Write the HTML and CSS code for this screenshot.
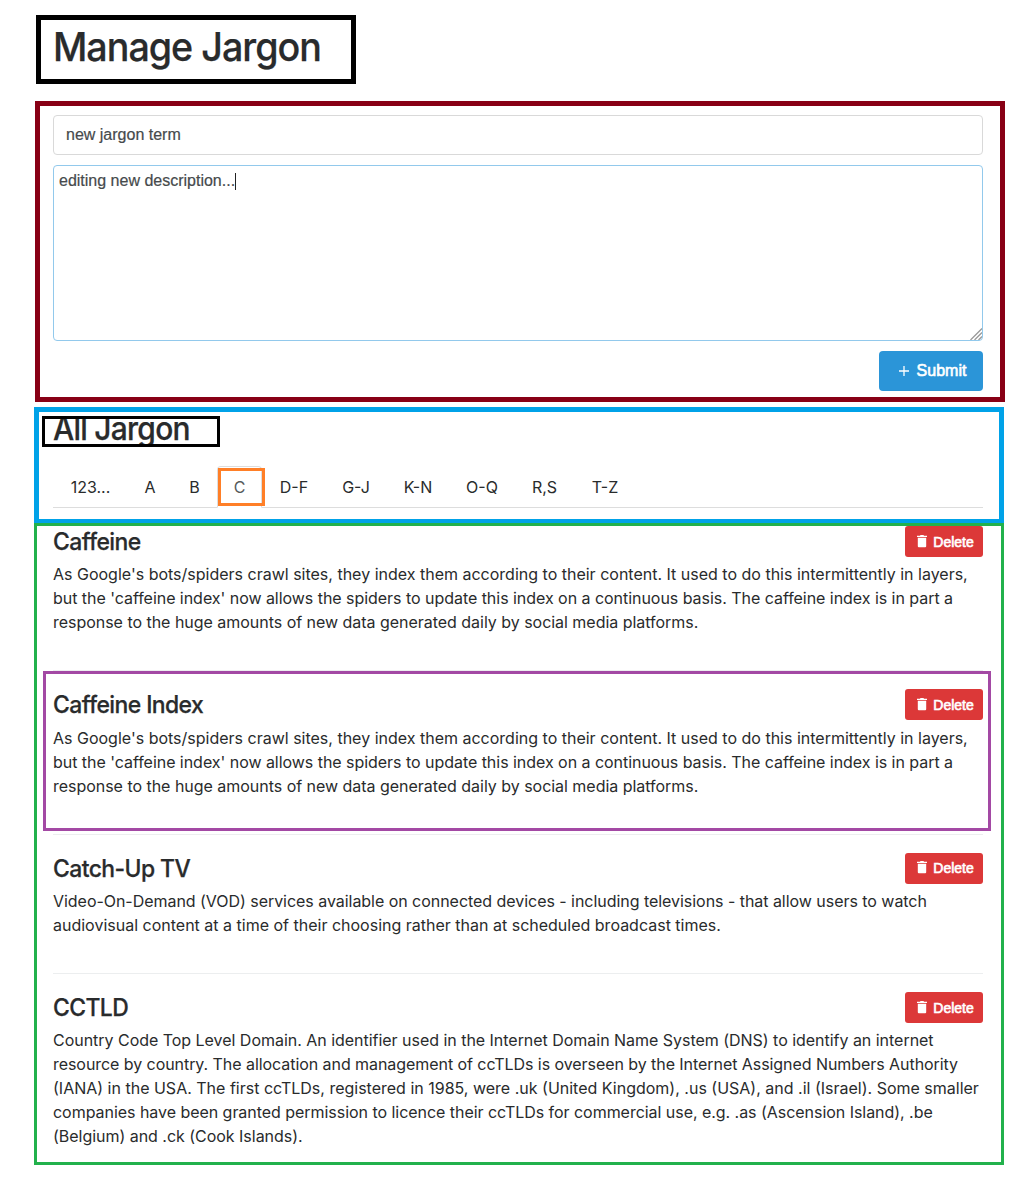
FILE: index.html
```html
<!DOCTYPE html>
<html lang="en">
<head>
<meta charset="utf-8">
<title>Manage Jargon</title>
<link rel="stylesheet" href="styles.css">
</head>
<body>
<svg width="0" height="0" class="defs">
  <symbol id="trash" viewBox="0 0 10 13"><path d="M0 .8h3L3.500 0h3L7 .8h3V2H0zM.8 2.8h8.4v8.4a1 1 0 0 1-1 1H1.8a1 1 0 0 1-1-1z" fill="#fff"/></symbol>
</svg>
<main class="page">
  <h1 class="page-title"><span>Manage Jargon</span></h1>

  <form class="editor">
    <input class="term" type="text" value="new jargon term" aria-label="Term">
    <div class="description" role="textbox" aria-multiline="true"><span class="typed">editing new description...</span><span class="caret"></span>
      <svg class="grip" width="12" height="12" viewBox="0 0 12 12"><path d="M.5 12l11.500-11.500M4.500 12l7.500-7.500M8.500 12l3.500-3.500" stroke="#999" stroke-width="1.3" fill="none"/></svg>
    </div>
    <button class="submit" type="button"><svg width="10" height="10" viewBox="0 0 10 10"><path d="M5 0v10M0 5h10" stroke="#fff" stroke-width="1.3"/></svg><span>Submit</span></button>
  </form>

  <section class="browse">
    <h2 class="section-title"><span>All Jargon</span></h2>
    <nav class="tabs">
      <a>123...</a><a>A</a><a>B</a><a class="active">C</a><a>D-F</a><a>G-J</a><a>K-N</a><a>O-Q</a><a>R,S</a><a>T-Z</a>
    </nav>
  </section>

  <section class="list">
    <article class="item">
      <header><h3><span>Caffeine</span></h3><button class="delete" type="button"><svg width="10" height="13"><use href="#trash"/></svg><span>Delete</span></button></header>
      <p>As Google's bots/spiders crawl sites, they index them according to their content. It used to do this intermittently in layers,<br><span class="snug">but the 'caffeine index' now allows the spiders to update this index on a continuous basis. The caffeine index is in part a</span><br><span class="close">response to the huge amounts of new data generated daily by social media platforms.</span></p>
    </article>
    <article class="item marked">
      <header><h3><span>Caffeine Index</span></h3><button class="delete" type="button"><svg width="10" height="13"><use href="#trash"/></svg><span>Delete</span></button></header>
      <p>As Google's bots/spiders crawl sites, they index them according to their content. It used to do this intermittently in layers,<br><span class="snug">but the 'caffeine index' now allows the spiders to update this index on a continuous basis. The caffeine index is in part a</span><br><span class="close">response to the huge amounts of new data generated daily by social media platforms.</span></p>
    </article>
    <article class="item">
      <header><h3><span>Catch-Up TV</span></h3><button class="delete" type="button"><svg width="10" height="13"><use href="#trash"/></svg><span>Delete</span></button></header>
      <p><span class="snug">Video-On-Demand (VOD) services available on connected devices - including televisions - that allow users to watch</span><br>audiovisual content at a time of their choosing rather than at scheduled broadcast times.</p>
    </article>
    <article class="item">
      <header><h3><span>CCTLD</span></h3><button class="delete" type="button"><svg width="10" height="13"><use href="#trash"/></svg><span>Delete</span></button></header>
      <p><span class="close">Country Code Top Level Domain. An identifier used in the Internet Domain Name System (DNS) to identify an internet</span><br><span class="tight">resource by country. The allocation and management of ccTLDs is overseen by the Internet Assigned Numbers Authority</span><br>(IANA) in the USA. The first ccTLDs, registered in 1985, were .uk (United Kingdom), .us (USA), and .il (Israel). Some smaller<br><span class="snug">companies have been granted permission to licence their ccTLDs for commercial use, e.g. .as (Ascension Island), .be</span><br><span class="close">(Belgium) and .ck (Cook Islands).</span></p>
    </article>
  </section>
</main>
</body>
</html>
```
FILE: styles.css
```css
*, *::after { box-sizing: border-box; }
body { margin: 0; background: #fff; color: #292b2c; font: 16px/24px Inter, sans-serif; }
.defs { position: absolute; }
.page { width: 971px; margin-left: 34px; padding-top: 15px; height: 1184px; }
h1, h2, h3, p { margin: 0; font-weight: 500; white-space: nowrap; }
h1 span, h2 span, h3 span { display: inline-block; transform-origin: 0 50%; -webkit-text-stroke: .25px #292b2c; }
h1 span { transform: scaleX(.941); }
h2 span { transform: scaleX(.936); }
h3 span { transform: scaleX(.955); }

.page-title { width: 320px; height: 69px; margin-left: 2px; border: 5px solid #000; padding: 5px 0 0 12px; font-size: 40px; line-height: 44px; letter-spacing: -1.05px; }

.editor { margin: 17px 0 0 1px; width: 970px; height: 301px; border: 5px solid #880015; padding: 9px 17px 6px 13px; display: flex; flex-direction: column; gap: 10px; }
.term, .description { width: 930px; border: 1px solid #d9d9d9; border-radius: 4px; color: #464a4c; font: 16px/20px "Liberation Sans", sans-serif; -webkit-text-stroke: .2px #464a4c; }
.term { height: 40px; padding: 0 12px; outline: 0; }
.description { position: relative; height: 176px; border-color: #92c9ec; padding: 5px; display: flex; }
.caret { width: 1px; height: 17px; margin-top: 2px; background: #222; }
.grip { position: absolute; right: 0; bottom: 0; }
.submit, .delete { border: 0; color: #fff; display: flex; align-items: center; justify-content: center; font-family: "Liberation Sans", sans-serif; -webkit-text-stroke: .6px #fff; }
.submit { align-self: flex-end; width: 104px; height: 40px; padding: 0 0 1px 3px; gap: 8px; border-radius: 4px; background: #2b95d8; font-size: 16px; }

.browse { margin-top: 5px; width: 970px; height: 116px; border: 5px solid #00a2e8; border-bottom: 4px solid #00a2e8; padding: 4px 16px 0 14px; }
.section-title { position: relative; height: 31px; margin-left: -11px; width: 178px; padding-left: 11px; font-size: 32px; line-height: 25px; letter-spacing: -.8px; }
.section-title::after { content: ""; position: absolute; inset: 0; border: 3px solid #000; box-shadow: 0 3px #fff; }
.tabs { display: grid; grid-template-columns: 75px 44px 45px 45px 64px 60px 64px 64px 61px 60px; height: 42px; margin-top: 19px; border-bottom: 1px solid #ddd; }
.tabs a { height: 42px; line-height: 43px; text-align: center; }
.tabs .active { position: relative; color: #55595c; border: 1px solid #ddd; border-bottom-color: #fff; border-radius: 4px 4px 0 0; line-height: 41px; }
.active::after { content: ""; position: absolute; left: 0; top: 1px; width: 47px; height: 38px; border: 3px solid #ff7f27; }

.list { width: 970px; height: 642px; border: 3px solid #22b14c; padding: 0 18px 0 16px; }
.item + .item { border-top: 1px solid #eceeef; margin-top: 36px; padding-top: 18px; }
.item header { display: flex; justify-content: space-between; height: 36.4px; }
.item:last-child header { height: 35.5px; }
.item h3 { font-size: 24px; line-height: 31px; letter-spacing: -.6px; }
.item p { font-weight: 400; }
.close { letter-spacing: -.028px; }
.snug { letter-spacing: -.04px; }
.tight { letter-spacing: -.06px; }
.delete { width: 78px; height: 31px; padding: 0 0 0 3px; gap: 6px; border-radius: 3px; background: #dc3838; font-size: 14px; }
.delete svg { margin-top: -1px; }
.marked { position: relative; }
.marked::after { content: ""; position: absolute; left: -10px; top: 0; width: 948px; height: 160px; border: 3px solid #a349a4; }
```
